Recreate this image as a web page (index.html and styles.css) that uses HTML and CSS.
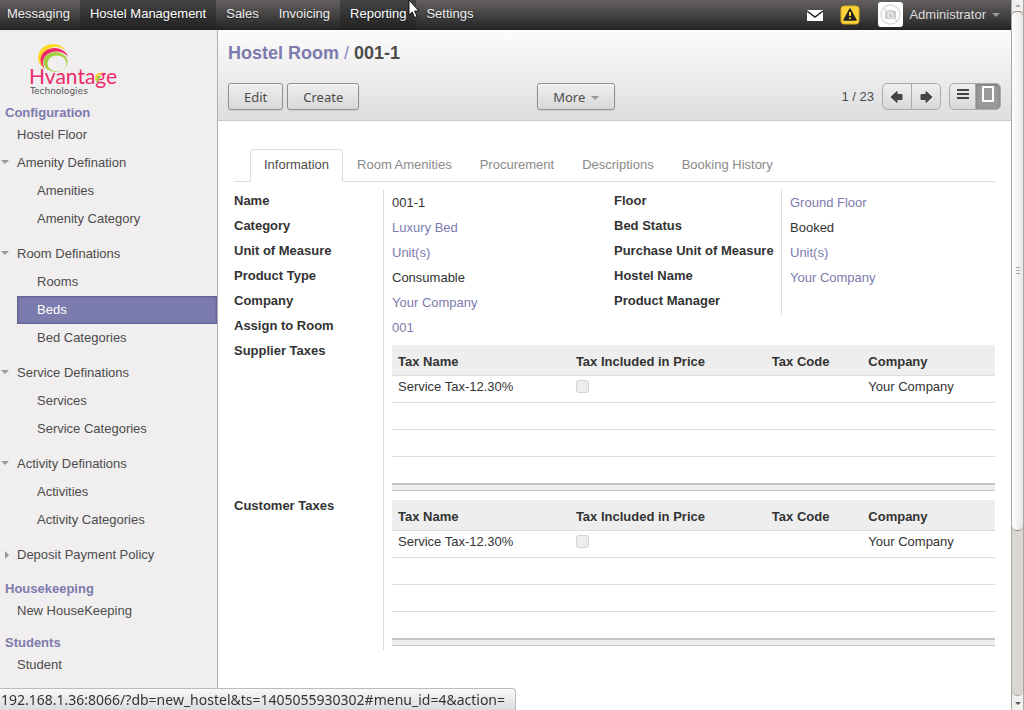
FILE: index.html
```
<!DOCTYPE html>
<html lang="en">
<head>
  <meta charset="UTF-8" />
  <meta name="viewport" content="width=device-width, initial-scale=1.0" />
  <title>001-1 - Hostel Room</title>
  <link rel="stylesheet" href="styles.css">
</head>
<body>
  <div class="window">
    <div class="app">
      <nav class="topbar">
        <ul class="menu">
          <li><a href="#">Messaging</a></li>
          <li><a href="#" class="active">Hostel Management</a></li>
          <li><a href="#">Sales</a></li>
          <li><a href="#">Invoicing</a></li>
          <li>
            <a href="#" class="hover">Reporting</a>
            <svg class="cursor" width="12" height="20" viewBox="0 0 12 20">
              <path d="M1 0V15L4.300 12L6.600 17.500L9 16.500L6.700 11H11Z" fill="#fff" stroke="#111" />
            </svg>
          </li>
          <li><a href="#">Settings</a></li>
        </ul>
        <div class="systray">
          <button class="tray-btn" aria-label="Compose message">
            <svg width="18" height="14" viewBox="0 0 18 14">
              <rect x="1" y="2" width="16" height="11" fill="#fff" />
              <path d="M1 3L9 9L17 3" fill="none" stroke="#222" stroke-width="1.500" />
            </svg>
          </button>
          <button class="tray-btn" aria-label="Warnings">
            <svg width="20" height="20" viewBox="0 0 20 20">
              <rect x="1" y="1" width="18" height="18" rx="3" fill="#fbd23a" stroke="#d9a91c" />
              <path d="M10 4L16 15H4Z" fill="#222" stroke="#222" stroke-width="1.500" stroke-linejoin="round" />
              <path d="M10 7V11M10 12.500V14" stroke="#fbd23a" stroke-width="2" />
            </svg>
          </button>
          <button class="user">
            <svg class="avatar" width="25" height="25" viewBox="0 0 25 25">
              <rect width="25" height="25" rx="3" fill="#fff" />
              <circle cx="12.500" cy="12.500" r="9.500" fill="none" stroke="#ddd" stroke-width="1.500" />
              <path d="M7 9H10L11 8H15L16 9H18V17H7Z" fill="#ccc" />
              <circle cx="12.500" cy="13" r="2.500" fill="#bbb" stroke="#fff" />
              <path d="M6 6L19 19" stroke="#ddd" stroke-width="1.500" />
            </svg>
            Administrator
            <span class="caret"></span>
          </button>
        </div>
      </nav>

      <div class="columns">
        <aside class="sidebar">
          <a href="#" class="logo" aria-label="Hvantage Technologies">
            <svg width="92" height="56" viewBox="0 0 92 56">
              <ellipse cx="23" cy="14.500" rx="15" ry="13.500" fill="#fbd92b" />
              <ellipse cx="26" cy="17" rx="14" ry="13" fill="#f0eeee" />
              <ellipse cx="24.500" cy="17" rx="14" ry="12" fill="#ee2a6b" />
              <ellipse cx="26.500" cy="20" rx="13.500" ry="11.500" fill="#f0eeee" />
              <ellipse cx="25.500" cy="19" rx="12" ry="10" fill="#a2ce3d" />
              <ellipse cx="27" cy="20.500" rx="9.500" ry="8" fill="#f0eeee" />
              <text x="-1" y="41" class="logo-name">Hvantage</text>
              <path d="M66 38C63 33 67 29 73 30C69 31 67 33 66 38Z" fill="#fbd92b" />
              <path d="M67 40C65 36 68 32 72 33C69 35 69 37 67 40Z" fill="#a2ce3d" />
              <text x="0" y="51" class="logo-sub">Technologies</text>
            </svg>
          </a>

          <h4>Configuration</h4>
          <ul class="plain">
            <li><a href="#">Hostel Floor</a></li>
          </ul>
          <ul class="tree">
            <li>
              <a href="#" class="open">Amenity Defination</a>
              <ul>
                <li><a href="#">Amenities</a></li>
                <li><a href="#">Amenity Category</a></li>
              </ul>
            </li>
            <li>
              <a href="#" class="open">Room Definations</a>
              <ul>
                <li><a href="#">Rooms</a></li>
                <li><a href="#" class="current">Beds</a></li>
                <li><a href="#">Bed Categories</a></li>
              </ul>
            </li>
            <li>
              <a href="#" class="open">Service Definations</a>
              <ul>
                <li><a href="#">Services</a></li>
                <li><a href="#">Service Categories</a></li>
              </ul>
            </li>
            <li>
              <a href="#" class="open">Activity Definations</a>
              <ul>
                <li><a href="#">Activities</a></li>
                <li><a href="#">Activity Categories</a></li>
              </ul>
            </li>
            <li><a href="#" class="closed">Deposit Payment Policy</a></li>
          </ul>
          <h4>Housekeeping</h4>
          <ul class="plain">
            <li><a href="#">New HouseKeeping</a></li>
          </ul>
          <h4>Students</h4>
          <ul class="plain">
            <li><a href="#">Student</a></li>
          </ul>
        </aside>

        <main class="content">
          <header class="view-header">
            <h2><a href="#">Hostel Room</a> <span class="sep">/</span> 001-1</h2>
            <div class="toolbar">
              <div class="actions">
                <button class="btn">Edit</button>
                <button class="btn">Create</button>
              </div>
              <div class="actions">
                <button class="btn">More <span class="caret"></span></button>
              </div>
              <div class="pager">
                <span>1 / 23</span>
                <div class="btn-group">
                  <button aria-label="Previous">
                    <svg width="14" height="12" viewBox="0 0 14 12"><path d="M1 6L7 0.500V3.500H12V8.500H7V11.500Z" fill="#444" stroke="#444" stroke-linejoin="round" /></svg>
                  </button>
                  <button aria-label="Next">
                    <svg width="14" height="12" viewBox="0 0 14 12"><path d="M13 6L7 0.500V3.500H2V8.500H7V11.500Z" fill="#444" stroke="#444" stroke-linejoin="round" /></svg>
                  </button>
                </div>
                <div class="btn-group views">
                  <button aria-label="List">
                    <svg width="12" height="18" viewBox="0 0 12 18"><path d="M0 5H12M0 9H12M0 13H12" stroke="#444" stroke-width="2" /></svg>
                  </button>
                  <button class="pressed" aria-label="Form">
                    <svg width="12" height="18" viewBox="0 0 12 18"><rect x="1" y="2" width="10" height="14" fill="#999" stroke="#fff" stroke-width="2" /></svg>
                  </button>
                </div>
              </div>
            </div>
          </header>

          <div class="sheet">
            <ul class="tabs">
              <li><a href="#" class="active">Information</a></li>
              <li><a href="#">Room Amenities</a></li>
              <li><a href="#">Procurement</a></li>
              <li><a href="#">Descriptions</a></li>
              <li><a href="#">Booking History</a></li>
            </ul>

            <div class="form">
              <div class="label">Name</div><div class="value">001-1</div>
              <div class="label">Floor</div><div class="value"><a href="#">Ground Floor</a></div>
              <div class="label">Category</div><div class="value"><a href="#">Luxury Bed</a></div>
              <div class="label">Bed Status</div><div class="value">Booked</div>
              <div class="label">Unit of Measure</div><div class="value"><a href="#">Unit(s)</a></div>
              <div class="label">Purchase Unit of Measure</div><div class="value"><a href="#">Unit(s)</a></div>
              <div class="label">Product Type</div><div class="value">Consumable</div>
              <div class="label">Hostel Name</div><div class="value"><a href="#">Your Company</a></div>
              <div class="label">Company</div><div class="value"><a href="#">Your Company</a></div>
              <div class="label">Product Manager</div><div class="value"></div>
              <div class="label">Assign to Room</div><div class="value wide"><a href="#">001</a></div>

              <div class="label">Supplier Taxes</div>
              <div class="list">
                <table>
                  <thead>
                    <tr><th class="c-name">Tax Name</th><th class="c-incl">Tax Included in Price</th><th class="c-code">Tax Code</th><th>Company</th></tr>
                  </thead>
                  <tbody>
                    <tr><td>Service Tax-12.30%</td><td><input type="checkbox" aria-label="Tax Included in Price" disabled></td><td></td><td>Your Company</td></tr>
                    <tr><td colspan="4"></td></tr>
                    <tr><td colspan="4"></td></tr>
                    <tr><td colspan="4"></td></tr>
                  </tbody>
                </table>
                <div class="list-foot"></div>
              </div>

              <div class="label">Customer Taxes</div>
              <div class="list">
                <table>
                  <thead>
                    <tr><th class="c-name">Tax Name</th><th class="c-incl">Tax Included in Price</th><th class="c-code">Tax Code</th><th>Company</th></tr>
                  </thead>
                  <tbody>
                    <tr><td>Service Tax-12.30%</td><td><input type="checkbox" aria-label="Tax Included in Price" disabled></td><td></td><td>Your Company</td></tr>
                    <tr><td colspan="4"></td></tr>
                    <tr><td colspan="4"></td></tr>
                    <tr><td colspan="4"></td></tr>
                  </tbody>
                </table>
                <div class="list-foot"></div>
              </div>
            </div>
          </div>
        </main>
      </div>
    </div>

    <div class="scrollbar">
      <span class="arrow up"></span>
      <div class="track"><div class="thumb"><i></i><i></i><i></i></div></div>
      <span class="arrow down"></span>
    </div>
  </div>

  <div class="status">192.168.1.36:8066/?db=new_hostel&amp;ts=1405055930302#menu_id=4&amp;action=</div>
</body>
</html>
```
FILE: styles.css
```
* {
  box-sizing: border-box;
}

body {
  margin: 0;
  font-family: "Liberation Sans", Arial, sans-serif;
  font-size: 13px;
  line-height: 18px;
  color: #4c4c4c;
  background: #fff;
}

a {
  color: #7c7bad;
  text-decoration: none;
}

ul {
  list-style: none;
  margin: 0;
  padding: 0;
}

button {
  font: inherit;
  cursor: pointer;
}

svg {
  display: block;
}

.window {
  display: grid;
  grid-template-columns: 1fr 13px;
  min-height: 100vh;
}

.app {
  display: flex;
  flex-direction: column;
}

.caret {
  display: inline-block;
  border: 4px solid transparent;
  border-top-color: #999;
  border-bottom: 0;
  vertical-align: middle;
}

/* top bar */
.topbar {
  display: flex;
  justify-content: space-between;
  height: 30px;
  background: linear-gradient(#646060, #262626);
  border-bottom: 1px solid #222;
}

.menu {
  display: flex;
}

.menu li {
  position: relative;
}

.menu li:first-child a {
  padding-left: 7px;
}

.menu a {
  display: block;
  padding: 5px 10px 6px;
  color: #eee;
  text-shadow: 0 1px 1px rgba(0, 0, 0, 0.4);
}

.menu a.active,
.menu a.hover {
  color: #fff;
  background: linear-gradient(#444, #222);
}

.cursor {
  position: absolute;
  top: 0;
  right: -4px;
  z-index: 2;
}

.systray {
  display: flex;
  align-items: center;
  padding-right: 11px;
}

.tray-btn,
.user {
  padding: 0;
  border: 0;
  background: none;
  color: #ddd;
}

.tray-btn {
  width: 18px;
  margin-right: 16px;
}

.user {
  display: flex;
  align-items: center;
  gap: 6px;
}

.avatar {
  margin-left: 4px;
}

/* left menu */
.columns {
  flex: 1;
  display: grid;
  grid-template-columns: 218px 1fr;
}

.sidebar {
  background: #f0eeee;
  border-right: 1px solid #afafb6;
}

.sidebar a {
  color: #4c4c4c;
}

.logo {
  display: block;
  padding: 13px 0 5px 30px;
}

.logo-name {
  font-family: Lato, sans-serif;
  font-size: 21px;
  fill: #ee2a6b;
}

.logo-sub {
  font-family: "DejaVu Sans", sans-serif;
  font-size: 9px;
  fill: #555;
}

.sidebar h4 {
  margin: 0;
  padding-left: 5px;
  font-size: 13px;
  color: #7c7bad;
}

.plain {
  padding: 4px 0 14px 17px;
}

.tree {
  margin-top: -9px;
  padding: 0 0 4px 17px;
}

.tree a {
  display: block;
  position: relative;
  padding: 5px 0;
}

.tree > li {
  margin-bottom: 7px;
}

.tree ul a {
  padding-left: 20px;
}

.tree a.open::before,
.tree a.closed::before {
  content: "";
  position: absolute;
  top: 11px;
  left: -16px;
  border: 4px solid transparent;
}

.tree a.open::before {
  border-top-color: #999;
  border-bottom: 0;
}

.tree a.closed::before {
  top: 10px;
  left: -12px;
  border-left-color: #999;
  border-right: 0;
}

.sidebar a.current {
  color: #fff;
  background: #7c7bad;
  box-shadow: inset 0 0 2px 1px #5c5b8d;
}

/* view header */
.view-header {
  height: 91px;
  padding: 12px 10px 0;
  background: linear-gradient(#fcfcfc, #dedede);
  border-bottom: 1px solid #cacaca;
}

.view-header h2 {
  margin: 0 0 19px;
  font-size: 18px;
  line-height: 22px;
}

.sep {
  font-weight: normal;
  color: #8a89ba;
}

.toolbar {
  display: grid;
  grid-template-columns: 40% 1fr auto;
  align-items: center;
}

.actions {
  display: flex;
  gap: 4px;
}

.btn {
  height: 27px;
  padding: 0 15px;
  font-family: "Noto Sans", sans-serif;
  color: #4c4c4c;
  border: 1px solid #8f8f8f;
  border-radius: 3px;
  background: linear-gradient(#efefef, #d8d8d8);
  box-shadow: 0 1px 2px rgba(0, 0, 0, 0.1), inset 0 1px 1px rgba(255, 255, 255, 0.8);
}

.btn .caret {
  margin-left: 2px;
}

.pager {
  display: flex;
  align-items: center;
  gap: 8px;
}

.btn-group {
  display: flex;
  height: 27px;
  border: 1px solid #ababab;
  border-radius: 5px;
  background: linear-gradient(#efefef, #d8d8d8);
  overflow: hidden;
}

.btn-group button {
  width: 28px;
  padding: 0;
  border: 0;
  background: none;
}

.btn-group button + button {
  width: 29px;
  border-left: 1px solid #ababab;
}

.btn-group svg {
  margin: 0 auto;
}

.btn-group.views button {
  width: 25px;
  padding-bottom: 5px;
}

.btn-group .pressed {
  background: #999;
  box-shadow: inset 0 1px 3px #777;
}

/* form */
.sheet {
  padding: 28px 16px 50px;
}

.tabs {
  display: flex;
  padding-left: 16px;
  border-bottom: 1px solid #ddd;
}

.tabs a {
  display: block;
  margin-bottom: -1px;
  padding: 6px 13px 7px;
  color: #8a8a8a;
  border: 1px solid transparent;
  border-radius: 4px 4px 0 0;
}

.tabs a.active {
  color: #4c4c4c;
  background: #fff;
  border-color: #ddd;
  border-bottom-color: #fff;
}

.form {
  display: grid;
  grid-template-columns: 150px 230fr 168px 213fr;
  padding-top: 8px;
}

.label {
  padding: 2px 0 5px;
  font-weight: bold;
  white-space: nowrap;
  color: #333;
  border-right: 1px solid #ddd;
}

.value {
  padding: 4px 0 3px 8px;
  color: #333;
}

.wide,
.list {
  grid-column: 2 / -1;
}

.list {
  padding: 5px 0 4px 8px;
}

.list table {
  width: 100%;
  table-layout: fixed;
  border-collapse: collapse;
}

.list th {
  height: 30px;
  padding: 5px 6px 0;
  text-align: left;
  background: #eee;
  border-bottom: 1px solid #ddd;
}

.list td {
  height: 27px;
  padding: 0 6px 3px;
  border-bottom: 1px solid #ddd;
}

.list tbody tr:last-child td {
  border-bottom: 0;
}

.list th,
.list td {
  color: #333;
}

.c-name {
  width: 29.5%;
}

.c-incl {
  width: 32.5%;
}

.c-code {
  width: 16%;
}

.list input {
  display: block;
  appearance: none;
  width: 13px;
  height: 13px;
  margin: 0 0 2px;
  border: 1px solid #d5d2cf;
  border-radius: 3px;
  background: #efedec;
}

.list-foot {
  height: 8px;
  background: #eee;
  border-top: 2px solid #c4c4c4;
  border-bottom: 1px solid #c4c4c4;
}

/* browser chrome */
.scrollbar {
  position: sticky;
  top: 0;
  display: flex;
  flex-direction: column;
  height: 100vh;
  background: #f2f1f0;
  border-left: 1px solid #aaa6a2;
  border-right: 1px solid #aaa6a2;
}

.arrow {
  height: 11px;
  display: flex;
  align-items: center;
  justify-content: center;
}

.arrow::after {
  content: "";
  border: 3px solid transparent;
}

.up::after {
  border-bottom-color: #aaa;
  border-top: 0;
}

.down {
  height: 14px;
}

.down::after {
  border-top-color: #555;
  border-bottom: 0;
}

.track {
  flex: 1;
  background: #dad6d3;
  border-bottom: 1px solid #aaa6a2;
  border-radius: 0 0 5px 5px;
}

.thumb {
  display: flex;
  flex-direction: column;
  align-items: center;
  justify-content: center;
  gap: 2px;
  height: 76%;
  border: solid #8f8b87;
  border-width: 1px 0;
  border-radius: 5px;
  background: linear-gradient(to right, #fff, #e8e6e4);
}

.thumb i {
  width: 4px;
  height: 1px;
  background: #aaa;
}

.status {
  position: fixed;
  left: 0;
  bottom: 0;
  padding: 0 10px 0 1px;
  font-family: "Noto Sans", sans-serif;
  font-size: 14px;
  line-height: 21px;
  color: #333;
  background: linear-gradient(#f8f8f8, #dcdcdc);
  border: solid #bbb;
  border-width: 1px 1px 0 0;
  border-radius: 0 4px 0 0;
}
```
